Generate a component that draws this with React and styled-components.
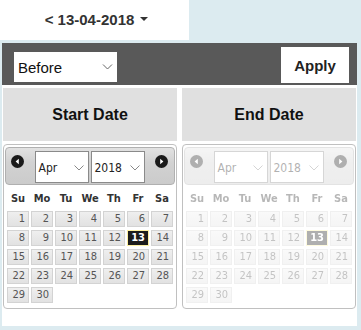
import React from 'react';
import styled, { createGlobalStyle } from 'styled-components';

const GlobalStyle = createGlobalStyle`
  html, body { margin: 0; padding: 0; }
  body {
    background: #dcebf0;
    width: 361px;
    height: 330px;
    overflow: hidden;
    font-family: "Liberation Sans", Arial, sans-serif;
  }
`;

const Page = styled.div`
  width: 361px;
  height: 330px;
  display: flex;
  flex-direction: column;
`;

const DateBar = styled.div`
  width: 189px;
  height: 40px;
  background: #fff;
  display: flex;
  align-items: center;
  justify-content: center;
  gap: 6px;
  font: bold 15px "Liberation Sans", Arial, sans-serif;
  color: #333;
  padding: 0 0 2px 4px;
  box-sizing: border-box;
`;

const Panel = styled.div`
  margin: 3px 4px 4px 2px;
  flex: 1;
  background: #fff;
  display: flex;
  flex-direction: column;
`;

const Toolbar = styled.div`
  height: 42px;
  background: #595959;
  display: flex;
  align-items: flex-end;
  justify-content: space-between;
  padding: 0 8px 2px 12px;
  box-sizing: border-box;
`;

const FilterSelect = styled.div`
  width: 103px;
  height: 30px;
  margin-bottom: 1px;
  background: #fff;
  box-sizing: border-box;
  display: flex;
  align-items: center;
  justify-content: space-between;
  padding: 0 4px 0 4px;
  font: 15px "Liberation Sans", Arial, sans-serif;
  color: #111;
`;

const ApplyButton = styled.button`
  width: 68px;
  height: 36px;
  border: none;
  background: #fff;
  font: bold 15px "Liberation Sans", Arial, sans-serif;
  color: #222;
  padding: 0;
`;

const Columns = styled.div`
  display: grid;
  grid-template-columns: 174px 174px;
  column-gap: 5px;
  padding: 3px 1px 0 1px;
`;

const Column = styled.div`
  display: flex;
  flex-direction: column;
  gap: 3px;
`;

const ColumnHeader = styled.div`
  height: 53px;
  background: #e0e0e0;
  display: flex;
  align-items: center;
  justify-content: center;
  font: bold 16px "Liberation Sans", Arial, sans-serif;
  color: #111;
`;

const Calendar = styled.div`
  border: 1px solid #c0c0c0;
  border-radius: 4px;
  padding: 2px 1px 6px;
  box-sizing: border-box;
  height: 165px;
  font-family: "DejaVu Sans Condensed", "DejaVu Sans", Verdana, sans-serif;
`;

const Faded = styled.div`
  opacity: ${p => (p.$faded ? 0.35 : 1)};
`;

const CalHeader = styled.div`
  height: 38px;
  box-sizing: border-box;
  border: 1px solid #b0b0b0;
  border-radius: 4px;
  background: linear-gradient(to bottom, #e2e2e2 0%, #d2d2d2 40%, #cbcbcb 100%);
  display: flex;
  align-items: flex-start;
  padding: 3px 6px 0 5px;
`;

const NavIcon = styled.svg`
  width: 13px;
  height: 13px;
  margin-top: 4px;
  flex: none;
`;

const Selects = styled.div`
  flex: 1;
  display: flex;
  justify-content: center;
  gap: 2px;
`;

const MiniSelect = styled.div`
  width: 54px;
  height: 32px;
  box-sizing: border-box;
  background: #fff;
  border: 1px solid #8a8a8a;
  display: flex;
  align-items: center;
  justify-content: space-between;
  padding: 2px 4px 0 3px;
  font-size: 12px;
  color: #222;
`;

const DayGrid = styled.div`
  display: grid;
  grid-template-columns: repeat(7, 1fr);
  column-gap: 2px;
  row-gap: ${p => (p.$head ? 0 : 3)}px;
  padding: 0 2px;
  margin-top: 3px;
`;

const WeekDay = styled.div`
  height: 20px;
  display: flex;
  align-items: center;
  justify-content: center;
  font-size: 11px;
  font-weight: bold;
  color: #333;
`;

const DayCell = styled.div`
  height: 16px;
  box-sizing: border-box;
  border: 1px solid ${p => (p.$active ? '#fcefa1' : '#d3d3d3')};
  background: ${p => (p.$active ? '#1c1c1c' : 'linear-gradient(to bottom, #efefef 0%, #e8e8e8 50%, #e2e2e2 100%)')};
  color: ${p => (p.$active ? '#fff' : '#555')};
  font-weight: ${p => (p.$active ? 'bold' : 'normal')};
  font-size: 11px;
  line-height: 14px;
  text-align: right;
  padding-right: 3px;
`;

const Chevron = ({ color = '#777', w = 10 }) => (
  <svg width={w} height="6" viewBox="0 0 10 6" style={{ flex: 'none' }}>
    <polyline points="0.5,0.5 5,5 9.5,0.5" fill="none" stroke={color} strokeWidth="1" />
  </svg>
);

const Caret = () => (
  <svg width="8" height="4" viewBox="0 0 8 4">
    <polygon points="0,0 8,0 4,4" fill="#333" />
  </svg>
);

const Nav = ({ dir }) => (
  <NavIcon viewBox="0 0 13 13">
    <circle cx="6.5" cy="6.5" r="6.5" fill="#1a1a1a" />
    {dir === 'prev' ? (
      <polygon points="7.8,3.8 4.6,6.5 7.8,9.2" fill="#fff" />
    ) : (
      <polygon points="5.2,3.8 8.4,6.5 5.2,9.2" fill="#fff" />
    )}
  </NavIcon>
);

const weekDays = ['Su', 'Mo', 'Tu', 'We', 'Th', 'Fr', 'Sa'];
const days = Array.from({ length: 30 }, (_, i) => i + 1);

const DatePicker = ({ faded }) => (
  <Calendar>
    <Faded $faded={faded}>
      <CalHeader>
        <Nav dir="prev" />
        <Selects>
          <MiniSelect>
            <span>Apr</span>
            <Chevron color="#888" />
          </MiniSelect>
          <MiniSelect>
            <span>2018</span>
            <Chevron color="#888" />
          </MiniSelect>
        </Selects>
        <Nav dir="next" />
      </CalHeader>
      <DayGrid $head>
        {weekDays.map(d => (
          <WeekDay key={d}>{d}</WeekDay>
        ))}
      </DayGrid>
      <DayGrid>
        {days.map(d => (
          <DayCell key={d} $active={d === 13}>
            {d}
          </DayCell>
        ))}
      </DayGrid>
    </Faded>
  </Calendar>
);

export default function App() {
  return (
    <>
      <GlobalStyle />
      <Page>
        <DateBar>
          <span>&lt; 13-04-2018</span>
          <Caret />
        </DateBar>
        <Panel>
          <Toolbar>
            <FilterSelect>
              <span>Before</span>
              <Chevron color="#666" w={11} />
            </FilterSelect>
            <ApplyButton>Apply</ApplyButton>
          </Toolbar>
          <Columns>
            <Column>
              <ColumnHeader>Start Date</ColumnHeader>
              <DatePicker />
            </Column>
            <Column>
              <ColumnHeader>End Date</ColumnHeader>
              <DatePicker faded />
            </Column>
          </Columns>
        </Panel>
      </Page>
    </>
  );
}
